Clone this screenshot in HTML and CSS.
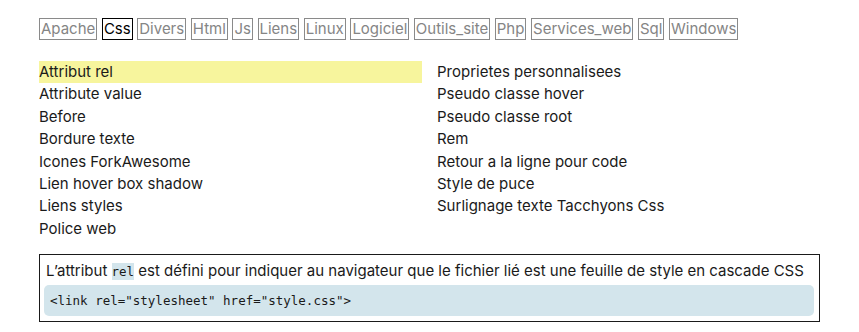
FILE: index.html
```html
<!DOCTYPE html>
<html lang="fr">
<head>
<meta charset="utf-8">
<link rel="stylesheet" href="styles.css">
</head>
<body>
<div class="page">
  <nav class="tags">
    <a class="tag">Apache</a>
    <a class="tag active">Css</a>
    <a class="tag">Divers</a>
    <a class="tag">Html</a>
    <a class="tag">Js</a>
    <a class="tag">Liens</a>
    <a class="tag">Linux</a>
    <a class="tag">Logiciel</a>
    <a class="tag">Outils_site</a>
    <a class="tag">Php</a>
    <a class="tag">Services_web</a>
    <a class="tag">Sql</a>
    <a class="tag">Windows</a>
  </nav>
  <div class="list">
    <ul class="col">
      <li class="item selected">Attribut rel</li>
      <li class="item">Attribute value</li>
      <li class="item">Before</li>
      <li class="item">Bordure texte</li>
      <li class="item">Icones ForkAwesome</li>
      <li class="item">Lien hover box shadow</li>
      <li class="item">Liens styles</li>
      <li class="item">Police web</li>
    </ul>
    <ul class="col">
      <li class="item">Proprietes personnalisees</li>
      <li class="item">Pseudo classe hover</li>
      <li class="item">Pseudo classe root</li>
      <li class="item">Rem</li>
      <li class="item">Retour a la ligne pour code</li>
      <li class="item">Style de puce</li>
      <li class="item">Surlignage texte Tacchyons Css</li>
    </ul>
  </div>
  <div class="detail">
    <p class="desc">L’attribut <code class="inline">rel</code> est défini pour indiquer au navigateur que le fichier lié est une feuille de style en cascade CSS</p>
    <pre class="code">&lt;link rel="stylesheet" href="style.css"&gt;</pre>
  </div>
</div>
</body>
</html>
```

FILE: styles.css
```css
html, body {
  margin: 0;
  padding: 0;
  background: #ffffff;
}
body {
  font-family: Inter, "Noto Sans", sans-serif;
  font-size: 15px;
  color: #1a1a1a;
}
.page {
  width: 781px;
  padding: 18px 0 0 39px;
}
.tags {
  display: flex;
  flex-wrap: wrap;
  gap: 4.6px;
  line-height: 20px;
}
.tag {
  border: 1px solid #8a8a8a;
  color: #858585;
  padding: 0 1px;
  font-size: 15px;
}
.tag.active {
  border-color: #000;
  color: #000;
}
.list {
  display: grid;
  grid-template-columns: 383px 383px;
  column-gap: 15px;
  margin-top: 21px;
}
.col {
  list-style: none;
  margin: 0;
  padding: 0;
}
.item {
  line-height: 22.4px;
}
.selected {
  background: #f7f59d;
}
.detail {
  margin-top: 14px;
  border: 1px solid #1a1a1a;
  padding: 5px 5px 5px 4px;
}
.desc {
  margin: 0 0 0 2px;
  line-height: 22px;
}
.inline {
  font-family: "DejaVu Sans Mono", monospace;
  font-size: 12.5px;
  background: #d3e5ec;
  padding: 1px 0;
}
.code {
  margin: 2px 0 0 0;
  background: #d3e5ec;
  border-radius: 5px;
  padding: 6px 6px;
  font-family: "DejaVu Sans Mono", monospace;
  font-size: 12.5px;
  line-height: 19px;
  color: #1a1a1a;
}
```
